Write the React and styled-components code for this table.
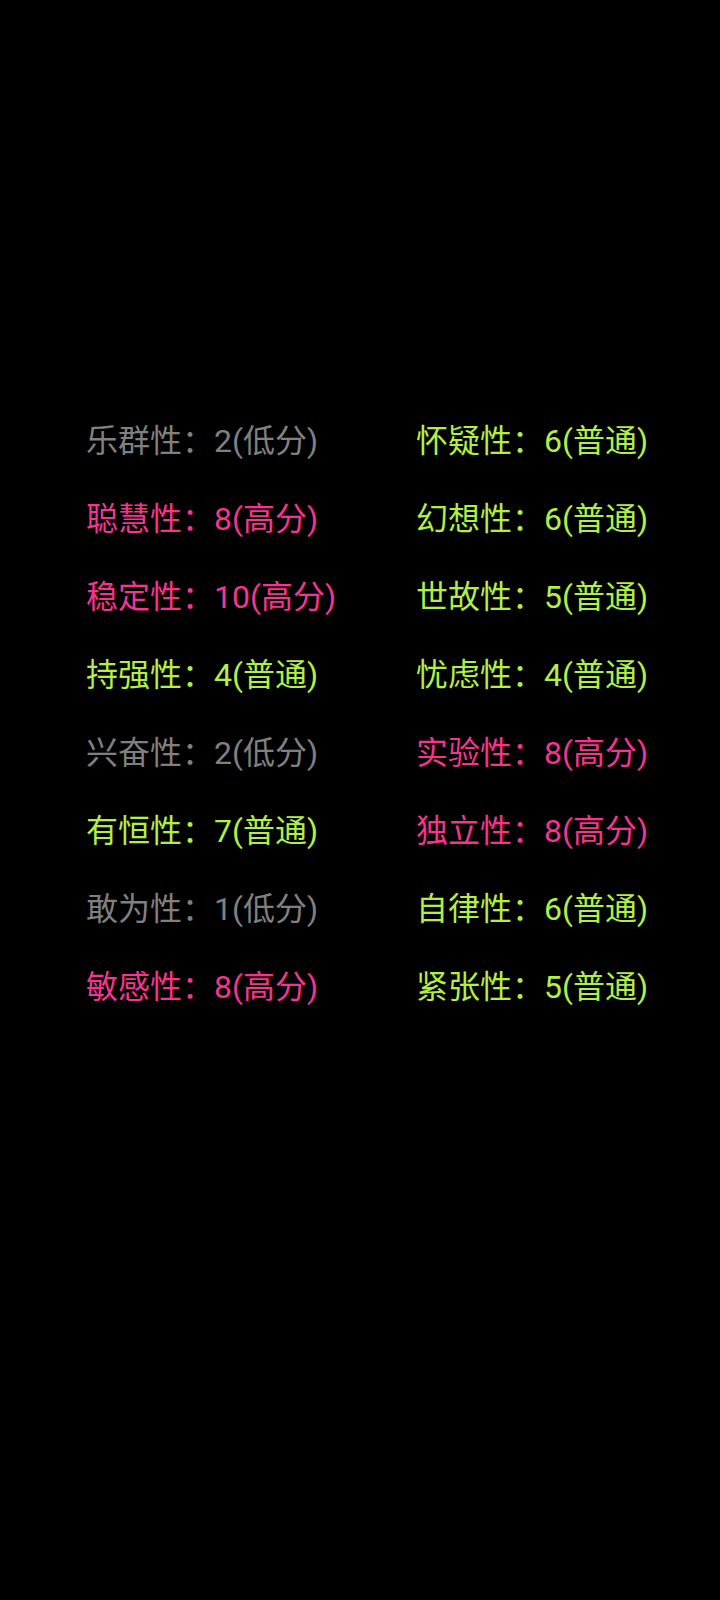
import React from "react";
import styled, { createGlobalStyle } from "styled-components";

const Global = createGlobalStyle`
  body {
    margin: 0;
    background: #000;
  }
`;

const Page = styled.div`
  width: 720px;
  height: 1600px;
  background: #000;
  padding: 402px 0 0 86px;
  box-sizing: border-box;
`;

const Grid = styled.div`
  display: grid;
  grid-template-columns: 330px 330px;
  grid-auto-rows: 78px;
`;

const colors = {
  low: "#808080",
  high: "#f5348f",
  normal: "#b2f040",
};

const Item = styled.div`
  font-family: Roboto, "Noto Sans CJK SC", sans-serif;
  font-size: 32px;
  line-height: 78px;
  white-space: nowrap;
  color: ${(p) => colors[p.$level]};
`;

const data = [
  ["乐群性", 2, "low"], ["怀疑性", 6, "normal"],
  ["聪慧性", 8, "high"], ["幻想性", 6, "normal"],
  ["稳定性", 10, "high"], ["世故性", 5, "normal"],
  ["持强性", 4, "normal"], ["忧虑性", 4, "normal"],
  ["兴奋性", 2, "low"], ["实验性", 8, "high"],
  ["有恒性", 7, "normal"], ["独立性", 8, "high"],
  ["敢为性", 1, "low"], ["自律性", 6, "normal"],
  ["敏感性", 8, "high"], ["紧张性", 5, "normal"],
];

const label = { low: "低分", high: "高分", normal: "普通" };

export default function App() {
  return (
    <>
      <Global />
      <Page>
        <Grid>
          {data.map(([name, score, level]) => (
            <Item key={name} $level={level}>
              {name}：{score}({label[level]})
            </Item>
          ))}
        </Grid>
      </Page>
    </>
  );
}
